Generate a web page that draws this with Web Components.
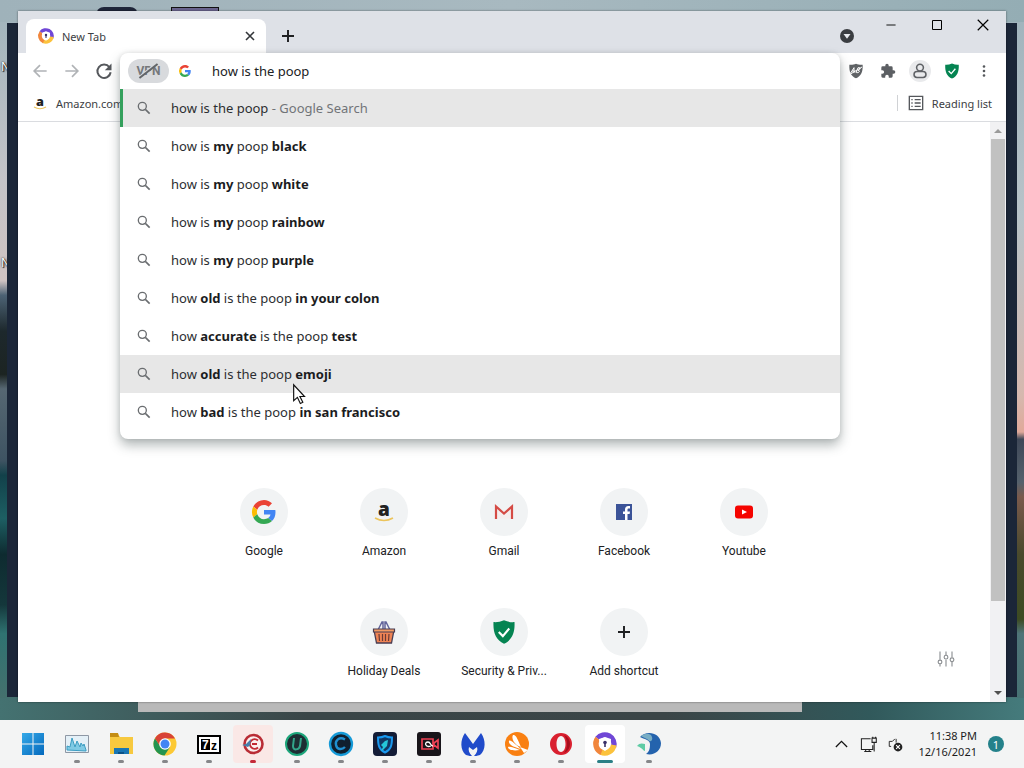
<!DOCTYPE html>
<html lang="en">
<head>
  <meta charset="utf-8">
  <title>New Tab</title>
  <style>
    body {
      font-family: "Noto Sans", "Open Sans", sans-serif;
      font-size: 11px;
      margin: 0;
    }
  </style>
</head>
<body>
<desktop-screen>
  <browser-window>
    <omni-box slot="omnibox" value="how is the poop">
      <search-suggestion selected>how is the poop <i>- Google Search</i></search-suggestion>
      <search-suggestion>how is <b>my</b> poop <b>black</b></search-suggestion>
      <search-suggestion>how is <b>my</b> poop <b>white</b></search-suggestion>
      <search-suggestion>how is <b>my</b> poop <b>rainbow</b></search-suggestion>
      <search-suggestion>how is <b>my</b> poop <b>purple</b></search-suggestion>
      <search-suggestion>how <b>old</b> is the poop <b>in your colon</b></search-suggestion>
      <search-suggestion>how <b>accurate</b> is the poop <b>test</b></search-suggestion>
      <search-suggestion hovered>how <b>old</b> is the poop <b>emoji</b></search-suggestion>
      <search-suggestion>how <b>bad</b> is the poop <b>in san francisco</b></search-suggestion>
    </omni-box>
    <site-shortcut icon="google" size="24">Google</site-shortcut>
    <site-shortcut icon="amazon" size="24">Amazon</site-shortcut>
    <site-shortcut icon="gmail" size="24">Gmail</site-shortcut>
    <site-shortcut icon="facebook" size="24">Facebook</site-shortcut>
    <site-shortcut icon="youtube" size="24">Youtube</site-shortcut>
    <site-shortcut icon="basket" size="24">Holiday Deals</site-shortcut>
    <site-shortcut icon="shield" size="28">Security &amp; Priv...</site-shortcut>
    <site-shortcut icon="plus" size="18">Add shortcut</site-shortcut>
  </browser-window>
  <task-bar slot="taskbar"></task-bar>
</desktop-screen>

<script>
const icons = {
  back: '<path d="M20 12H5M12 5l-7 7 7 7" fill="none" stroke="#b0b3b6" stroke-width="2"/>',
  forward: '<path d="M4 12h15M12 5l7 7-7 7" fill="none" stroke="#b0b3b6" stroke-width="2"/>',
  reload: '<path d="M18.5 7.5A8 8 0 1 0 20 13.5" fill="none" stroke="#55585c" stroke-width="2.4"/><path d="M21 3v8h-8z" fill="#55585c"/>',
  close: '<path d="M6 6l12 12M18 6L6 18" fill="none" stroke="#33363a" stroke-width="2.4"/>',
  plus: '<path d="M12 4v16M4 12h16" fill="none" stroke="#1f2022" stroke-width="2.6"/>',
  magnify: '<circle cx="9.5" cy="9.5" r="6" fill="none" stroke="#6a6d70" stroke-width="2"/><path d="M14 14l6.5 6.5" stroke="#6a6d70" stroke-width="2.4"/>',
  minimize: '<path d="M1 12h22" stroke="#000" stroke-width="2.2"/>',
  maximize: '<path d="M3 3h18v18H3z" fill="none" stroke="#000" stroke-width="2"/>',
  windowClose: '<path d="M3 3l18 18M21 3L3 21" stroke="#000" stroke-width="2"/>',
  dropCircle: '<circle cx="12" cy="12" r="12" fill="#3a3d41"/><path d="M6 8.5h12l-6 8z" fill="#e8eaee"/>',
  dots: '<g fill="#55585c"><circle cx="12" cy="3" r="2.6"/><circle cx="12" cy="12" r="2.6"/><circle cx="12" cy="21" r="2.6"/></g>',
  puzzle: '<path fill="#5c5f63" d="M20.5 11H19V7a2 2 0 0 0-2-2h-4V3.500a2.500 2.500 0 0 0-5 0V5H4a2 2 0 0 0-2 2v3.800h1.500a2.700 2.700 0 0 1 0 5.400H2V20a2 2 0 0 0 2 2h3.800v-1.500a2.700 2.700 0 0 1 5.400 0V22H17a2 2 0 0 0 2-2v-4h1.500a2.500 2.500 0 0 0 0-5z"/>',
  adblock: '<path fill="#5f6265" d="M12 1c3 1.500 6.500 1.700 10 1.500.5 11-2.500 17-10 20.500C4.500 19.500 1.500 13.500 2 2.500 5.500 2.700 9 2.500 12 1z"/><path d="M4 15l5-8v8M6 12h4M12 15l3-8c5-1 4 3 0 4 4 0 2 4-2 3.500M3 17L21 6" fill="none" stroke="#fff" stroke-width="1.5"/>',
  profile: '<circle cx="12" cy="12" r="12" fill="#e9eaec"/><circle cx="12" cy="8.3" r="3.7" fill="none" stroke="#5f6266" stroke-width="1.7"/><rect x="5.5" y="12.5" width="13" height="6.5" rx="3.2" fill="none" stroke="#5f6266" stroke-width="1.7"/>',
  shield: '<path fill="#058452" d="M12 2c3 1.300 6 1.700 9 1.500.5 9-2 15.500-9 18.500C5 19 2.500 12.500 3 3.500 6 3.700 9 3.300 12 2z"/><path d="M7.5 12l3.500 3.500L16.500 9" fill="none" stroke="#fff" stroke-width="1.8"/>',
  readingList: '<path d="M2 2h20v20H2z" fill="none" stroke="#55585c" stroke-width="2"/><path d="M5 7h2M5 12h2M5 17h2M10 7h9M10 12h9M10 17h9" stroke="#55585c" stroke-width="2"/>',
  sliders: '<g fill="none" stroke="#8b8e91" stroke-width="1.5"><path d="M4 2v11M4 19v3M12 2v5M12 13v9M20 2v8M20 16v6"/><circle cx="4" cy="16" r="2.5"/><circle cx="12" cy="9.5" r="2.5"/><circle cx="20" cy="13" r="2.5"/></g>',
  google: '<path fill="#ea4335" d="M12 4.900c1.800 0 3.300.6 4.600 1.800L20 3.300C17.900 1.300 15.200 0 12 0 7.300 0 3.200 2.700 1.300 6.600l4 3.100C6.200 6.900 8.900 4.900 12 4.900z"/><path fill="#4285f4" d="M23.500 12.300c0-.8-.1-1.600-.2-2.300H12v4.500h6.500c-.3 1.500-1.100 2.700-2.400 3.600l3.900 3c2.300-2.100 3.500-5.200 3.500-8.800z"/><path fill="#fbbc05" d="M5.300 14.300a7.300 7.300 0 0 1 0-4.600l-4-3.100a12 12 0 0 0 0 10.800z"/><path fill="#34a853" d="M12 24c3.200 0 6-1.100 8-2.900l-3.900-3c-1.100.7-2.500 1.200-4.100 1.200-3.100 0-5.800-2.100-6.700-5l-4 3.100C3.200 21.300 7.300 24 12 24z"/>',
  amazon: '<text x="12" y="16" text-anchor="middle" font-family="Open Sans, sans-serif" font-weight="800" font-size="19" fill="#222">a</text><path d="M3 18q9 5 18 0" fill="none" stroke="#ecc45c" stroke-width="1.6"/>',
  gmail: '<path d="M5.5 18.500V10l6.500 5.500 6.500-5.500v8.500z" fill="#f5eeee"/><path d="M4 19V6.500l8 7 8-7V19" fill="none" stroke="#d54b45" stroke-width="2.2"/>',
  facebook: '<path fill="#3b5398" d="M4 4h16v16H4z"/><path fill="#fff" d="M13 20v-6h-2v-2.500h2V9.500C13 7.200 14.300 6 16.300 6H18v2.400h-1.200c-1 0-1.300.5-1.300 1.300v1.800H18l-.4 2.500h-2.100v6z"/>',
  youtube: '<rect x="3" y="5.5" width="18" height="13" rx="3" fill="#f50400"/><path fill="#fff" d="M10 9.500v5l5-2.500z"/>',
  basket: '<path d="M6 10l4-8h1v8M18 10l-4-8h-1v8" fill="none" stroke="#63659b" stroke-width="1.5"/><path d="M2 10h20l-2.500 13h-15z" fill="#ef8354" stroke="#493d52" stroke-width="1.3"/><path d="M1.500 9h21v3h-21z" fill="#f39a63" stroke="#493d52" stroke-width="1.2"/><path d="M7 14l.5 7M10.500 14v7M13.500 14v7M17 14l-.5 7" stroke="#6b3b38" stroke-width="1.2"/>',
  secure: '<g fill="none" stroke-width="5.5"><path d="M4.500 6.500A9.200 9.200 0 0 1 20.500 15" stroke="#7047d6"/><path d="M20.800 13a9.200 9.200 0 0 1-13 7" stroke="#fcc23c"/><path d="M8.500 20.400A9.200 9.200 0 0 1 4.700 6.500" stroke="#f1863c"/></g><path d="M12 5l6 2c0 5-1 9-6 12-5-3-6-7-6-12z" fill="#fff"/><circle cx="12" cy="10.5" r="1.8" fill="#3a3269"/><path d="M11.200 10h1.600v5h-1.600z" fill="#3a3269"/>',
  start: '<linearGradient id="g" x2="1" y2="1"><stop stop-color="#35a9e8"/><stop offset="1" stop-color="#0469bd"/></linearGradient><path fill="url(#g)" d="M1 1h10.500v10.500H1zM12.500 1H23v10.500H12.500zM1 12.500h10.500V23H1zM12.500 12.500H23V23H12.500z"/>',
  monitor: '<path d="M.5 3.500h23v17H.5z" fill="#e4f0f7" stroke="#8e98a5"/><path d="M2 18v-4l3 1 2-9 3 9 2-6 3 6 1-4 2 3 1-2 2 6v1z" fill="#80cae4" stroke="#3c9dc2"/>',
  folder: '<path d="M1 2h8l2 3h13v17H1z" fill="#f7c93f"/><path d="M1 1h8l1 4H1z" fill="#c48d13"/><path d="M5 16h15v6H5z" fill="#1976b4"/><path d="M9 20h6v2H9z" fill="#0b5288"/>',
  chrome: '<circle cx="12" cy="12" r="11.5" fill="#fcc934"/><path d="M2 6.200A11.500 11.500 0 0 0 11.500 23.500L17 15 6.500 13z" fill="#239450"/><path d="M12 6.500h10A11.500 11.500 0 0 0 2 6.200l4.500 7z" fill="#d84337"/><circle cx="12" cy="12" r="5.8" fill="#fff"/><circle cx="12" cy="12" r="4.5" fill="#4285f4"/>',
  sevenZip: '<path d="M1 4h22v17H1z" fill="#fff" stroke="#000" stroke-width="2"/><path d="M4 7h9v11H4z" fill="#000"/><text x="5" y="17" font-family="Liberation Sans, sans-serif" font-weight="700" font-size="12" fill="#fff">7</text><text x="14" y="18" font-family="Liberation Sans, sans-serif" font-weight="700" font-size="12" fill="#000">z</text>',
  cleaner: '<circle cx="12.5" cy="12" r="9" fill="#fbeeee" stroke="#b92c35" stroke-width="2.6"/><path d="M17 8.500a4.800 4.800 0 1 0 0 7M11 12h5" fill="none" stroke="#c22933" stroke-width="2"/><path d="M1 13l4-1 5-5-1 6-2 2z" fill="#467eaa"/>',
  uninstaller: '<circle cx="12" cy="12" r="11" fill="#1d2d33" stroke="#1ca67b" stroke-width="2"/><path d="M9 6L8 14c0 5 6 4 7 0l1-8" fill="none" stroke="#32a48a" stroke-width="2"/>',
  care: '<circle cx="12" cy="12" r="11" fill="#101f2e" stroke="#159ad8" stroke-width="2.3"/><path d="M16 7.500C10 4 6 9 7 13c1 5 6 5 9 2" fill="none" stroke="#1f8fd0" stroke-width="2.4"/>',
  defender: '<rect width="24" height="24" rx="4" fill="#131c36"/><path d="M12 4c2 1 4 1.500 7 1.500 0 8-1 12-7 15-6-3-7-7-7-15C8 5.500 10 5 12 4z" fill="#123964" stroke="#1998ef" stroke-width="2"/><path d="M8 13l4-4 3-1-1 6-4 4-2 1 2-4z" fill="#25c7d9"/>',
  recorder: '<rect width="24" height="24" rx="3" fill="#18151a"/><path d="M5 7h11v10H5zM17 11l4-3v8l-4-3z" fill="none" stroke="#ee4054" stroke-width="1.7"/><path d="M14 14c-6 2-7-4-3-4 3 0 2 4 5 4" fill="none" stroke="#fff" stroke-width="1.3"/>',
  malware: '<path d="M4 1l8 11 8-11c5 7 5 17-1 22-3 1-5 1-6 1 3-3 4-6 3-9l-4 3-4-3c-1 3 0 6 3 9-1 0-3 0-6-1-6-5-6-15-1-22z" fill="#204bca"/>',
  avast: '<circle cx="12" cy="12" r="12" fill="#f98012"/><path d="M8 3c3-1 5 5 8 12C9 13 6 6 8 3zM4 9c1-2 6 3 12 8C8 15 3 12 4 9zM3 15c1-1 7 1 12 3C8 19 3 18 3 15zM15 15l8 3-4 3z" fill="#fff"/>',
  opera: '<path fill="#d9202f" fill-rule="evenodd" d="M12 1a11 11 0 1 0 0 22 11 11 0 0 0 0-22zm0 3c3 0 4.500 4 4.500 8S15 20 12 20s-4.500-4-4.500-8S9 4 12 4z"/><path d="M15 3c8 3 8 15 0 18 4-5 4-13 0-18z" fill="#a60e1c"/>',
  edge: '<path d="M3 5C9-2 23 0 24 11c0 8-7 13-15 11 3-2 4-5 4-10 0-4-6-5-10-7z" fill="#2463ad"/><path d="M4 4c4-3 10-3 11 1 1 3-1 5-3 4-2-3-5-3-8-5z" fill="#78adc4"/><path d="M0 14c2-3 5-3 8-2v7c-2 0-2-3-8-5z" fill="#5fcca5"/>',
  chevron: '<path d="M3 16l9-9 9 9" fill="none" stroke="#111" stroke-width="2"/>',
  network: '<path d="M15 4H2v15h16v-6M6 22h10M8 19v3M13 19v3M17 3h6v6h-6zM20 9v13M18 1v2M22 1v2" fill="none" stroke="#222" stroke-width="1.5"/>',
  speaker: '<path d="M11 3L7 7H2v8h3M13 3v6" fill="none" stroke="#222" stroke-width="1.5"/><circle cx="16" cy="16" r="7" fill="#222"/><path d="M13 13l6 6M19 13l-6 6" stroke="#fff" stroke-width="1.8"/>',
  cursor: '<path d="M2 1v19l4.500-4 3.500 7.500 3-1.500-3.500-7H15z" fill="#fff" stroke="#111" stroke-width="1.4"/>'
}

class UiIcon extends HTMLElement {

  constructor () {
    super()
    this.shadow = this.attachShadow({ mode: 'open' })
  }

  connectedCallback () {
    const size = this.getAttribute('size') || 16

    this.shadow.innerHTML =
    /*html*/`
    <style>
      :host {
        display: block;
        flex: none;
      }

      svg {
        display: block;
        overflow: visible;
      }
    </style>
    <svg viewBox="0 0 24 24" width="${size}" height="${size}" aria-hidden="true">${icons[this.getAttribute('name')]}</svg>
    `
  }
}

customElements.define('ui-icon', UiIcon)

class DesktopScreen extends HTMLElement {

  constructor () {
    super()
    this.shadow = this.attachShadow({ mode: 'open' })
  }

  connectedCallback () {
    this.shadow.innerHTML =
    /*html*/`
    <style>
      :host {
        display: flex;
        flex-direction: column;
        height: 100vh;
        overflow: hidden;
      }

      .wallpaper {
        background:
          linear-gradient(90deg, #447271, #3a4648 30%, #3b4547 65%, #31595b 85%, #457b7c) bottom / 100% 22px no-repeat,
          linear-gradient(90deg, #9fb2ba, #a8b9c0 50%, #94adb4) top / 100% 22px no-repeat,
          linear-gradient(#9fb3bc, #b8c3c9 30%, #d6b8ae 55%, #e0a99a 60%, #3f4858 61%, #55616c 67%, #7a5a4c 69%, #4a4a2c 77%, #3d4b22 86%, #4f7478 88%, #447172) right / 50% 100% no-repeat,
          linear-gradient(#9fb3bc, #c4c4c8 25%, #cfc3c2 39%, #4c6274 41%, #1d282c 46%, #1c2422 52%, #566772 54%, #3e5362 64%, #12414a 66%, #1d5f63 72%, #0e2b30 77%, #14373b 84%, #2f7371 88%, #4c6f6c) left / 50% 100% no-repeat;
        flex: 1;
        min-height: 0;
        overflow: hidden;
        position: relative;
      }

      .label {
        color: #fff;
        font-size: 12px;
        left: 1px;
        position: absolute;
        text-shadow: 1px 1px 1px #000, 0 0 2px #000;
      }

      .label.first { top: 58px; }
      .label.second { top: 254px; }

      .tile {
        background: #20263a;
        border-radius: 8px 8px 0 0;
        height: 12px;
        left: 96px;
        position: absolute;
        top: 7px;
        width: 42px;
      }

      .tile.purple {
        background: #6b6590;
        border: 1px solid #111;
        border-radius: 0;
        left: 171px;
        width: 46px;
      }

      .behind {
        background: #1b2638;
        inset: 23px 7px 23px 7px;
        position: absolute;
      }

      .behind.light {
        background: #b9b9b9;
        inset: 23px 222px 8px 138px;
      }

      slot:not([name])::slotted(*) {
        inset: 11px 18px 18px 18px;
        position: absolute;
        z-index: 0;
      }

      .cursor {
        left: 292px;
        position: absolute;
        top: 384px;
        z-index: 1;
      }
    </style>
    <div class="wallpaper">
      <span class="label first">N</span>
      <span class="label second">N</span>
      <div class="tile"></div>
      <div class="tile purple"></div>
      <div class="behind light"></div>
      <div class="behind"></div>
      <slot></slot>
      <ui-icon class="cursor" name="cursor" size="20"></ui-icon>
    </div>
    <slot name="taskbar"></slot>
    `
  }
}

customElements.define('desktop-screen', DesktopScreen)

class BrowserWindow extends HTMLElement {

  constructor () {
    super()
    this.shadow = this.attachShadow({ mode: 'open' })
  }

  connectedCallback () {
    this.shadow.innerHTML =
    /*html*/`
    <style>
      :host {
        background: #fff;
        box-shadow: 0 0 2px rgba(0, 0, 0, 0.5);
        color: #3c4043;
        display: flex;
        flex-direction: column;
      }

      button {
        align-items: center;
        background: transparent;
        border: none;
        color: inherit;
        display: flex;
        flex: none;
        font: inherit;
        height: 28px;
        justify-content: center;
        padding: 0;
        width: 28px;
      }

      a {
        align-items: center;
        color: inherit;
        display: flex;
        gap: 8px;
        text-decoration: none;
      }

      .tab-strip {
        background: #dee1e7;
        display: flex;
        height: 42px;
        padding-left: 8px;
      }

      .tab {
        align-items: center;
        background: #fff;
        border-radius: 8px 8px 0 0;
        box-sizing: border-box;
        display: flex;
        gap: 8px;
        height: 34px;
        margin-top: 8px;
        padding: 0 2px 0 12px;
        width: 240px;
      }

      .tab span {
        flex: 1;
      }

      .new-tab {
        margin: 11px 0 0 8px;
      }

      .tab-search {
        margin: 11px 7px 0 auto;
      }

      .caption button {
        width: 46px;
      }

      .caption,
      .nav,
      .actions {
        display: flex;
      }

      .toolbar {
        align-items: center;
        display: flex;
        height: 36px;
        position: relative;
        z-index: 1;
      }

      .nav {
        gap: 4px;
        padding: 0 2px 0 8px;
      }

      .actions {
        gap: 4px;
        padding: 0 8px 0 2px;
      }

      .omnibox {
        align-self: stretch;
        flex: 1;
        position: relative;
      }

      .bookmarks {
        align-items: center;
        border-bottom: 1px solid #dadce0;
        box-sizing: border-box;
        display: flex;
        height: 33px;
        justify-content: space-between;
        padding: 0 14px 4px;
      }

      .reading {
        border-left: 1px solid #d0d2d5;
        padding-left: 10px;
      }

      .page {
        display: flex;
        flex: 1;
        min-height: 0;
      }

      main {
        flex: 1;
        position: relative;
      }

      .shortcuts {
        display: flex;
        flex-wrap: wrap;
        justify-content: center;
        margin: 0 auto;
        max-width: 600px;
        padding-top: 366px;
      }

      .customize {
        bottom: 29px;
        position: absolute;
        right: 30px;
      }

      .scrollbar {
        align-items: center;
        background: #f1f1f3;
        display: flex;
        flex-direction: column;
        width: 16px;
      }

      .arrow {
        color: #9a9a9a;
        height: 17px;
        width: 16px;
      }

      .arrow::before {
        border: 4px solid transparent;
        border-bottom-color: currentColor;
        border-top: none;
        content: '';
      }

      .arrow.down {
        color: #505050;
        transform: rotate(180deg);
      }

      .thumb {
        background: #c1c1c1;
        flex: 11;
        width: 14px;
      }

      .rest {
        flex: 2;
      }
    </style>

    <header class="tab-strip">
      <div class="tab">
        <ui-icon name="secure" size="16"></ui-icon>
        <span>New Tab</span>
        <button aria-label="Close tab"><ui-icon name="close" size="16"></ui-icon></button>
      </div>
      <button class="new-tab" aria-label="New tab"><ui-icon name="plus" size="18"></ui-icon></button>
      <button class="tab-search" aria-label="Search tabs"><ui-icon name="dropCircle" size="14"></ui-icon></button>
      <div class="caption">
        <button aria-label="Minimize"><ui-icon name="minimize" size="10"></ui-icon></button>
        <button aria-label="Maximize"><ui-icon name="maximize" size="12"></ui-icon></button>
        <button aria-label="Close"><ui-icon name="windowClose" size="14"></ui-icon></button>
      </div>
    </header>

    <div class="toolbar">
      <div class="nav">
        <button aria-label="Back"><ui-icon name="back" size="20"></ui-icon></button>
        <button aria-label="Forward"><ui-icon name="forward" size="20"></ui-icon></button>
        <button aria-label="Reload"><ui-icon name="reload" size="20"></ui-icon></button>
      </div>
      <div class="omnibox"><slot name="omnibox"></slot></div>
      <div class="actions">
        <button aria-label="Ad blocker"><ui-icon name="adblock" size="16"></ui-icon></button>
        <button aria-label="Extensions"><ui-icon name="puzzle" size="16"></ui-icon></button>
        <button aria-label="Profile"><ui-icon name="profile" size="22"></ui-icon></button>
        <button aria-label="Security"><ui-icon name="shield" size="18"></ui-icon></button>
        <button aria-label="Menu"><ui-icon name="dots" size="12"></ui-icon></button>
      </div>
    </div>

    <div class="bookmarks">
      <a href="#"><ui-icon name="amazon" size="16"></ui-icon>Amazon.com</a>
      <a class="reading" href="#"><ui-icon name="readingList" size="16"></ui-icon>Reading list</a>
    </div>

    <div class="page">
      <main>
        <div class="shortcuts"><slot></slot></div>
        <button class="customize" aria-label="Customize"><ui-icon name="sliders" size="18"></ui-icon></button>
      </main>
      <div class="scrollbar">
        <button class="arrow" aria-label="Scroll up"></button>
        <div class="thumb"></div>
        <div class="rest"></div>
        <button class="arrow down" aria-label="Scroll down"></button>
      </div>
    </div>
    `
  }
}

customElements.define('browser-window', BrowserWindow)

class OmniBox extends HTMLElement {

  constructor () {
    super()
    this.shadow = this.attachShadow({ mode: 'open' })
  }

  connectedCallback () {
    this.shadow.innerHTML =
    /*html*/`
    <style>
      :host {
        background: #fff;
        border-radius: 8px;
        box-shadow: 0 6px 12px rgba(60, 75, 75, 0.4), 0 0 5px rgba(0, 0, 0, 0.1);
        color: #202124;
        display: block;
        left: 0;
        overflow: hidden;
        padding-bottom: 8px;
        position: absolute;
        right: 0;
        top: 0;
      }

      .field {
        align-items: center;
        display: flex;
        height: 36px;
        padding-left: 8px;
      }

      .vpn {
        background: #d8dadd;
        border: none;
        border-radius: 12px;
        color: #75787b;
        font: 700 12px Roboto, sans-serif;
        height: 24px;
        margin-right: 10px;
        padding: 0;
        position: relative;
        width: 41px;
      }

      .vpn::after {
        background: #626568;
        box-shadow: 0 -1px #d8dadd;
        content: '';
        height: 2px;
        left: 9px;
        position: absolute;
        top: 11px;
        transform: rotate(-38deg);
        width: 23px;
      }

      input {
        background: transparent;
        border: none;
        color: inherit;
        flex: 1;
        font: inherit;
        font-size: 13px;
        margin-left: 21px;
        outline: none;
        padding: 0;
      }
    </style>
    <div class="field">
      <button class="vpn">VPN</button>
      <ui-icon name="google" size="12"></ui-icon>
      <input type="text" aria-label="Search or enter address" value="${this.getAttribute('value')}">
    </div>
    <slot></slot>
    `
  }
}

customElements.define('omni-box', OmniBox)

class SearchSuggestion extends HTMLElement {

  constructor () {
    super()
    this.shadow = this.attachShadow({ mode: 'open' })
  }

  connectedCallback () {
    this.shadow.innerHTML =
    /*html*/`
    <style>
      :host {
        display: block;
        font-size: 13px;
      }

      a {
        align-items: center;
        border-left: 3px solid transparent;
        box-sizing: border-box;
        color: #2c2e31;
        display: flex;
        gap: 19px;
        height: 38px;
        padding-left: 13px;
        text-decoration: none;
      }

      :host([selected]) a,
      :host([hovered]) a {
        background: #e7e7e7;
      }

      :host([selected]) a {
        border-left-color: #34a05c;
      }

      ::slotted(b) {
        color: #1b1c1e;
        font-weight: 700;
      }

      ::slotted(i) {
        color: #717478;
        font-style: normal;
      }
    </style>
    <a href="#"><ui-icon name="magnify" size="16"></ui-icon><span><slot></slot></span></a>
    `
  }
}

customElements.define('search-suggestion', SearchSuggestion)

class SiteShortcut extends HTMLElement {

  constructor () {
    super()
    this.shadow = this.attachShadow({ mode: 'open' })
  }

  connectedCallback () {
    this.shadow.innerHTML =
    /*html*/`
    <style>
      :host {
        display: block;
        font-family: Roboto, sans-serif;
        font-size: 12px;
        height: 120px;
        width: 120px;
      }

      a {
        align-items: center;
        color: #202124;
        display: flex;
        flex-direction: column;
        gap: 8px;
        line-height: 14px;
        text-decoration: none;
      }

      .circle {
        align-items: center;
        background: #f1f3f4;
        border-radius: 50%;
        display: flex;
        height: 48px;
        justify-content: center;
        width: 48px;
      }
    </style>
    <a href="#">
      <span class="circle"><ui-icon name="${this.getAttribute('icon')}" size="${this.getAttribute('size')}"></ui-icon></span>
      <span><slot></slot></span>
    </a>
    `
  }
}

customElements.define('site-shortcut', SiteShortcut)

class TaskBar extends HTMLElement {

  constructor () {
    super()
    this.shadow = this.attachShadow({ mode: 'open' })
  }

  connectedCallback () {
    const apps = [
      ['start', 'Start', ''],
      ['monitor', 'Resource Monitor', 'running'],
      ['folder', 'File Explorer', 'running'],
      ['chrome', 'Chrome', 'running'],
      ['sevenZip', '7-Zip', 'running'],
      ['cleaner', 'Cleaner', 'running alert'],
      ['uninstaller', 'Uninstaller', 'running'],
      ['care', 'System Care', 'running'],
      ['defender', 'Defender', 'running'],
      ['recorder', 'Screen Recorder', 'running'],
      ['malware', 'Malware Scanner', 'running'],
      ['avast', 'Antivirus', 'running'],
      ['opera', 'Opera', 'running'],
      ['secure', 'Secure Browser', 'running active'],
      ['edge', 'Web Browser', 'running']
    ]

    this.shadow.innerHTML =
    /*html*/`
    <style>
      :host {
        align-items: center;
        background: #f3f4f4;
        color: #1c1c1c;
        display: flex;
        flex: none;
        height: 48px;
        justify-content: space-between;
        padding: 0 20px 0 13px;
      }

      button {
        background: transparent;
        border: none;
        display: flex;
        padding: 0;
      }

      .apps {
        display: flex;
        gap: 4px;
      }

      .apps button {
        align-items: center;
        border-radius: 4px;
        flex-direction: column;
        height: 38px;
        justify-content: space-between;
        padding-top: 7px;
        width: 40px;
      }

      .apps button.alert {
        background: #fae8e6;
      }

      .apps button.active {
        background: #fff;
      }

      .running::after {
        background: #858789;
        border-radius: 2px;
        content: '';
        height: 3px;
        width: 6px;
      }

      .alert::after {
        background: #c42b3a;
      }

      .active::after {
        background: #2b8086;
        width: 16px;
      }

      .tray {
        align-items: center;
        display: flex;
        gap: 11px;
      }

      time {
        line-height: 16px;
        margin-left: 4px;
        text-align: right;
      }

      .count {
        align-items: center;
        background: #24818a;
        border-radius: 50%;
        color: #fff;
        font: inherit;
        height: 16px;
        justify-content: center;
        width: 16px;
      }
    </style>
    <div class="apps">
      ${apps.map(([icon, name, state]) => `<button class="${state}" aria-label="${name}"><ui-icon name="${icon}" size="24"></ui-icon></button>`).join('')}
    </div>
    <div class="tray">
      <button aria-label="Hidden icons"><ui-icon name="chevron" size="15"></ui-icon></button>
      <button aria-label="Network"><ui-icon name="network" size="17"></ui-icon></button>
      <button aria-label="Volume"><ui-icon name="speaker" size="15"></ui-icon></button>
      <time datetime="2021-12-16T23:38">11:38 PM<br>12/16/2021</time>
      <button class="count" aria-label="Notifications">1</button>
    </div>
    `
  }
}

customElements.define('task-bar', TaskBar)
</script>
</body>
</html>
